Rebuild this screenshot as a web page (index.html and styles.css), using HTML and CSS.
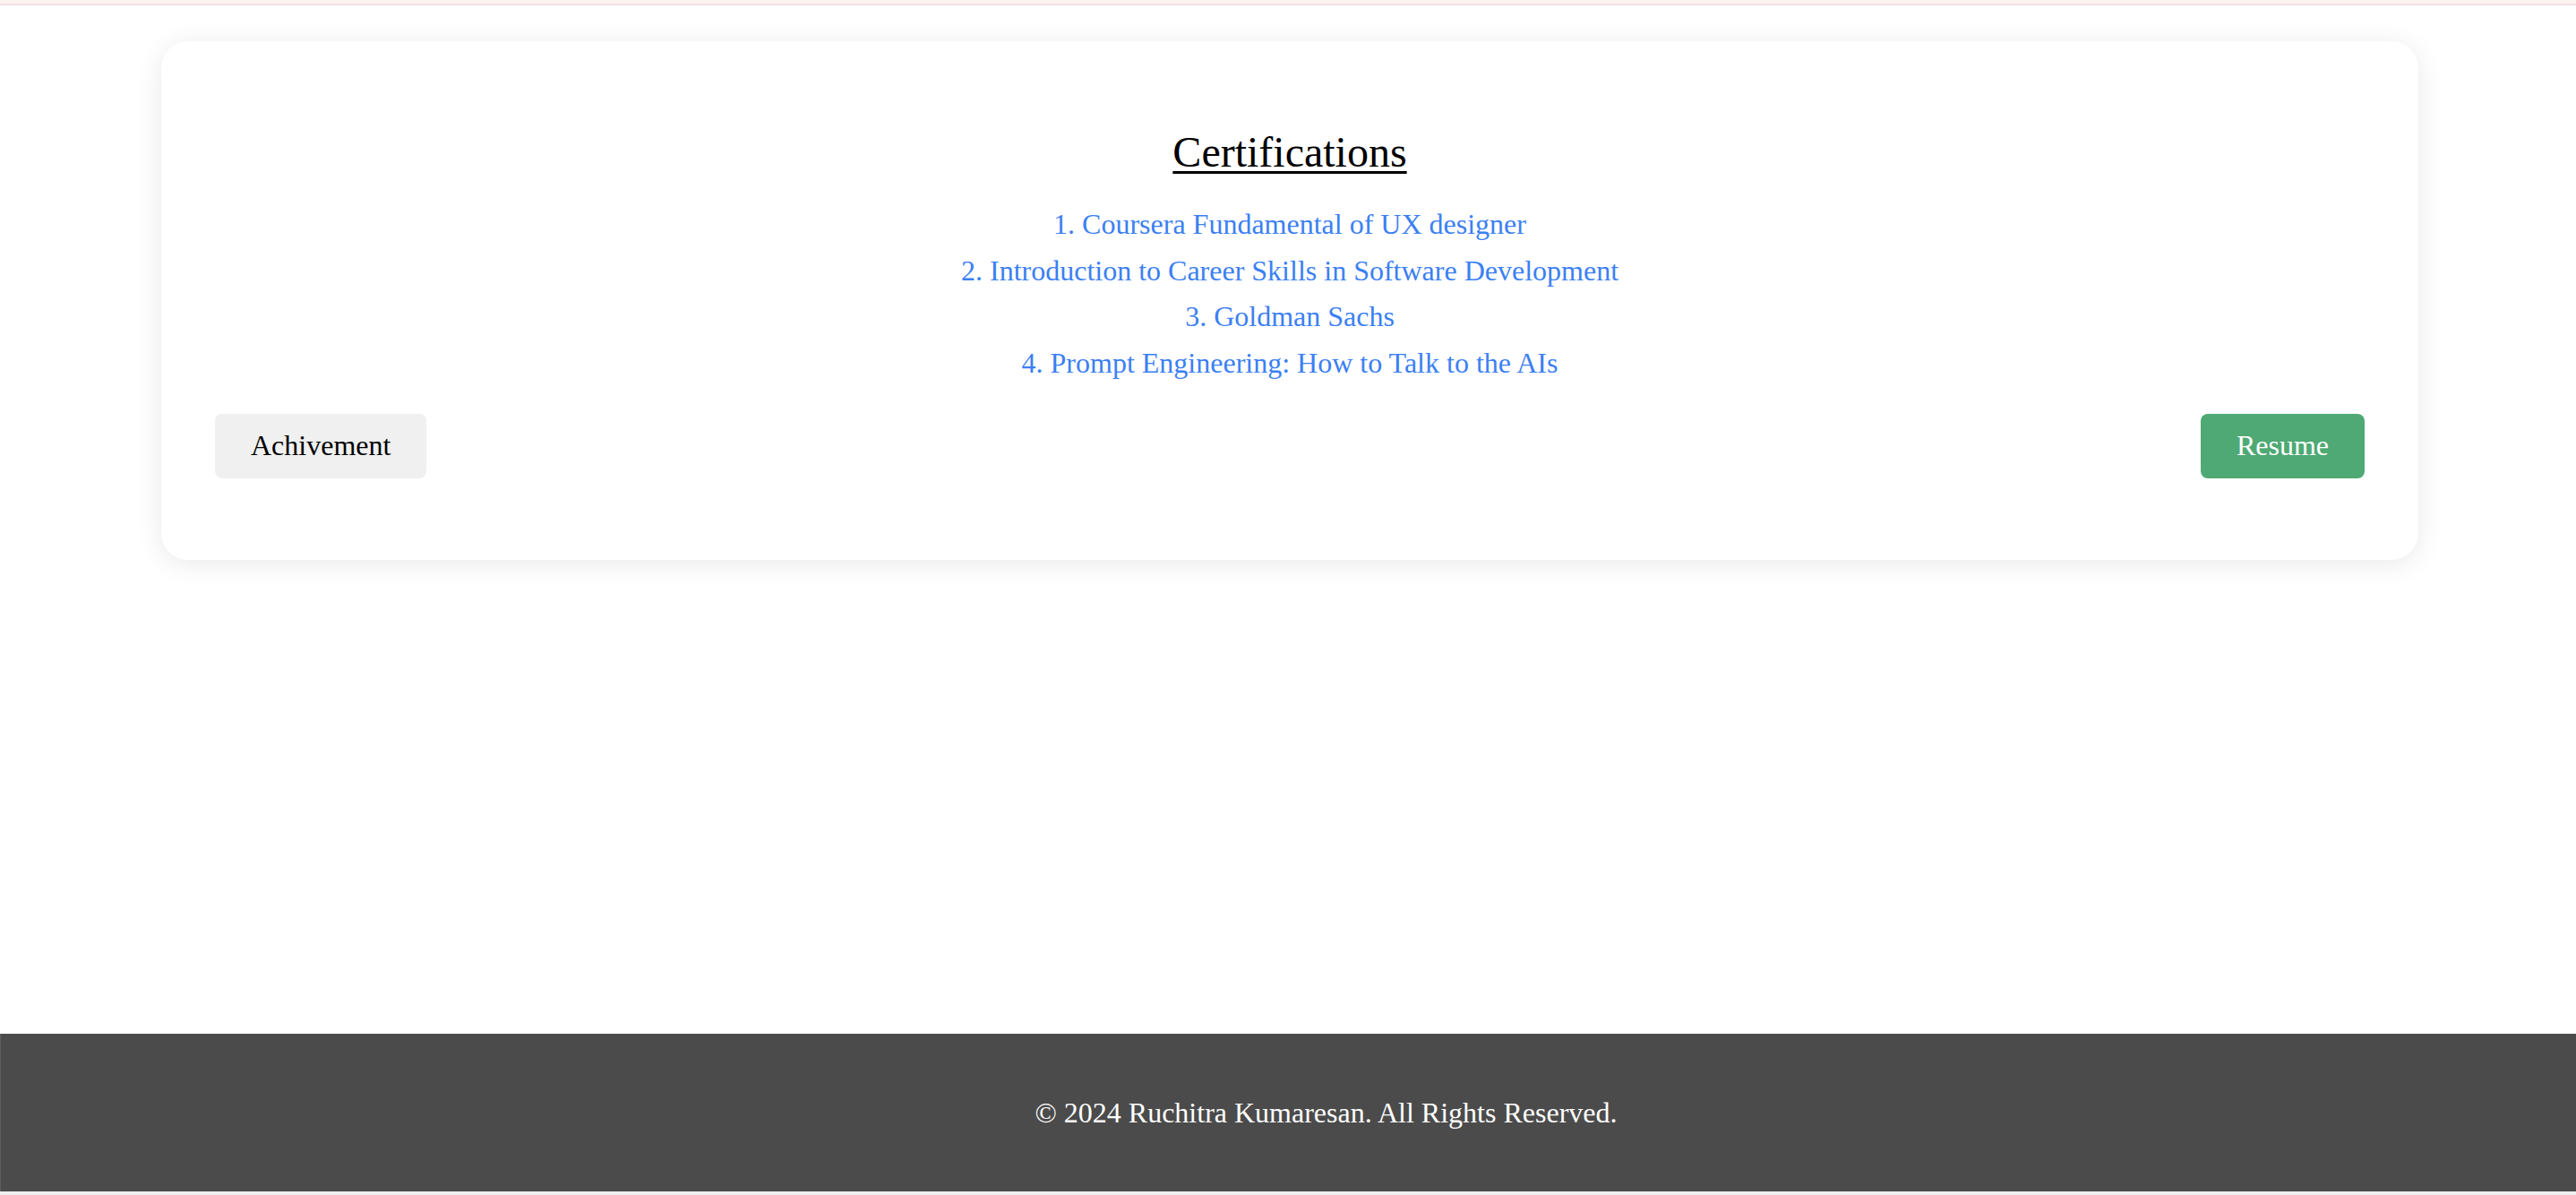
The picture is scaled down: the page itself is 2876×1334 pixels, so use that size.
FILE: index.html
```html
<!DOCTYPE html>
<html lang="en">
<head>
<meta charset="utf-8">
<title>Certifications</title>
<link rel="stylesheet" href="styles.css">
</head>
<body>
<div class="page">
  <header class="topbar"></header>
  <main class="main">
    <section class="card">
      <h2 class="card-title">Certifications</h2>
      <ul class="cert-list">
        <li>1. Coursera Fundamental of UX designer</li>
        <li>2. Introduction to Career Skills in Software Development</li>
        <li>3. Goldman Sachs</li>
        <li>4. Prompt Engineering: How to Talk to the AIs</li>
      </ul>
      <div class="nav-row">
        <a class="btn btn-light" href="#">Achivement</a>
        <a class="btn btn-green" href="#">Resume</a>
      </div>
    </section>
  </main>
  <footer class="footer">
    <p class="footer-text">© 2024 Ruchitra Kumaresan. All Rights Reserved.</p>
  </footer>
  <div class="bottom-strip"></div>
</div>
</body>
</html>
```

FILE: styles.css
```css
* { box-sizing: border-box; }

html, body {
  margin: 0;
  padding: 0;
  background: #ffffff;
}

body {
  font-family: "Liberation Serif", "Times New Roman", serif;
  font-size: 32px;
  color: #000;
}

.page {
  min-height: 1334px;
  display: flex;
  flex-direction: column;
}

.topbar {
  height: 6px;
  background: #fdf4f0;
  border-bottom: 2px solid #f2dfe2;
}

.main {
  flex: 1;
  padding: 40px 176px 0 180px;
}

.card {
  background: #fff;
  border-radius: 30px;
  box-shadow: 0 4px 30px rgba(0, 0, 0, 0.09);
  padding: 96px 60px 91px;
}

.card-title {
  margin: 0;
  text-align: center;
  font-size: 48px;
  font-weight: normal;
  line-height: 56px;
  text-decoration: underline;
  text-decoration-thickness: 3px;
  text-underline-offset: 5px;
}

.cert-list {
  list-style: none;
  margin: 27px 0 0;
  padding: 0;
  text-align: center;
  color: #3b80f3;
  line-height: 51.5px;
}

.nav-row {
  margin-top: 31px;
  display: flex;
  justify-content: space-between;
}

.btn {
  display: inline-block;
  padding: 15px 40px 17px;
  line-height: 40px;
  font-size: 32px;
  border-radius: 8px;
  text-decoration: none;
}

.btn-light {
  background: #f0f0f0;
  color: #000;
}

.btn-green {
  background: #4ea974;
  color: #fff;
}

.footer {
  background: #4b4b4b;
  border-left: 1px solid #5e5e5e;
  padding: 70px 0 69px 84px;
  text-align: center;
}

.footer-text {
  margin: 0;
  color: #fff;
  line-height: 37px;
}

.bottom-strip {
  height: 4px;
  background: #efefef;
}
```
